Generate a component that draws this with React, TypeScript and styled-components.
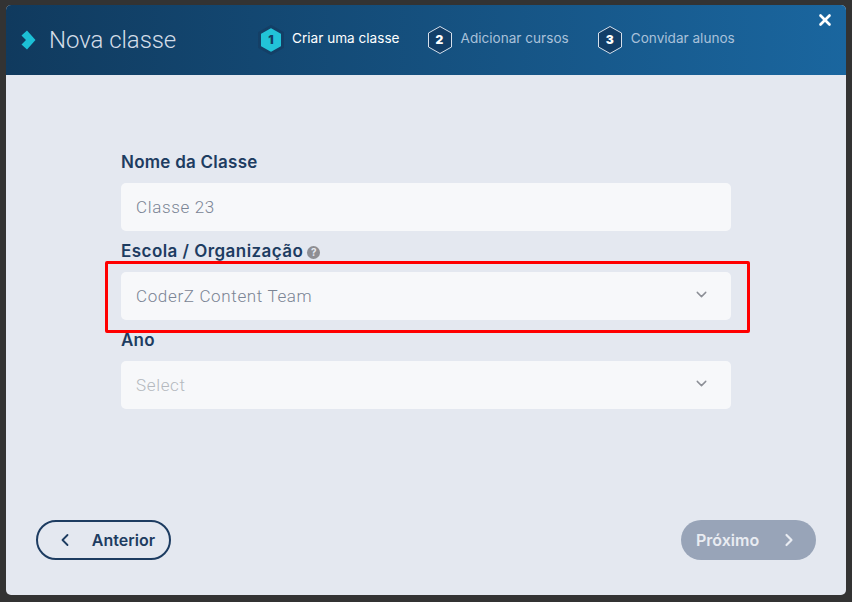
import styled, { createGlobalStyle } from 'styled-components'
import { ChevronDown, ChevronLeft, ChevronRight, X } from 'lucide-react'

const GlobalStyle = createGlobalStyle`
  html, body {
    margin: 0;
    padding: 0;
    background: #333333;
    font-family: Inter, "Noto Sans", sans-serif;
  }
  * { box-sizing: border-box; }
`

const Page = styled.div`
  position: relative;
  width: 852px;
  height: 602px;
  padding: 5px 6px 7px;
  background: #333333;
  overflow: hidden;
`

const Modal = styled.div`
  display: flex;
  flex-direction: column;
  width: 840px;
  height: 590px;
  border-radius: 5px;
  background: #e4e8f0;
  overflow: hidden;
`

const Header = styled.div`
  position: relative;
  display: flex;
  align-items: center;
  height: 70px;
  flex: none;
  padding-left: 15px;
  background: linear-gradient(90deg, #103a5e 0%, #1a669f 100%);
`

const TitleMark = styled.svg`
  width: 15px;
  height: 20px;
  flex: none;
`

const Title = styled.div`
  width: 208px;
  margin-left: 13px;
  font-family: Roboto, sans-serif;
  font-size: 24px;
  font-weight: 300;
  letter-spacing: -0.05px;
  color: #d4dde8;
`

const Steps = styled.div`
  display: flex;
  align-items: center;
  margin-top: -1px;
`

const Step = styled.div<{ $gap: number }>`
  display: flex;
  align-items: center;
  gap: 7px;
  margin-right: ${(p) => p.$gap}px;
`

const HexWrap = styled.div`
  position: relative;
  width: 28px;
  height: 30px;
  flex: none;
`

const HexNumber = styled.span<{ $active?: boolean }>`
  position: absolute;
  inset: 0;
  display: flex;
  align-items: center;
  justify-content: center;
  font-size: 12px;
  font-weight: 900;
  color: ${(p) => (p.$active ? '#123e63' : '#ffffff')};
`

const StepLabel = styled.span<{ $active?: boolean }>`
  font-size: 13.6px;
  line-height: 20px;
  margin-top: -3px;
  color: ${(p) => (p.$active ? '#ffffff' : '#a9c1da')};
`

const CloseButton = styled.button`
  position: absolute;
  top: 6px;
  right: 12px;
  display: flex;
  padding: 0;
  border: none;
  background: none;
  color: #ffffff;
`

const Form = styled.div`
  display: flex;
  flex-direction: column;
  width: 610px;
  margin-left: 115px;
  padding-top: 67px;
`

const Field = styled.div`
  display: flex;
  flex-direction: column;
`

const Label = styled.div<{ $spacing?: number }>`
  display: flex;
  align-items: center;
  gap: 4px;
  height: 41px;
  padding-bottom: 1px;
  font-size: 17px;
  font-weight: 600;
  letter-spacing: ${(p) => p.$spacing ?? 0.25}px;
  color: #1d3c61;
`

const HelpIcon = styled.span`
  display: inline-flex;
  align-items: center;
  justify-content: center;
  width: 13px;
  height: 13px;
  margin-top: 2px;
  border-radius: 50%;
  background: #8e8e93;
  font-size: 10px;
  font-weight: 700;
  letter-spacing: 0;
  color: #e4e8f0;
`

const Input = styled.div<{ $tone: string }>`
  display: flex;
  align-items: center;
  justify-content: space-between;
  height: 48px;
  padding: 0 21px 0 15px;
  border-radius: 5px;
  background: #f7f8fa;
  font-family: Roboto, sans-serif;
  font-size: 17px;
  font-weight: 300;
  letter-spacing: 0.65px;
  color: ${(p) => p.$tone};
`

const Chevron = styled(ChevronDown)`
  width: 17px;
  height: 17px;
  margin-top: -3px;
  color: #8c8f96;
`

const Highlight = styled.div`
  position: absolute;
  left: 105px;
  top: 261px;
  width: 645px;
  height: 72px;
  border: 3px solid #ff0000;
  border-radius: 2px;
  pointer-events: none;
`

const Footer = styled.div`
  display: flex;
  justify-content: space-between;
  margin-top: auto;
  padding: 0 30px 35px;
`

const NavButton = styled.button<{ $filled?: boolean }>`
  display: flex;
  align-items: center;
  justify-content: space-between;
  width: 135px;
  height: 40px;
  padding: ${(p) => (p.$filled ? '0 17px 0 15px' : '0 14px 0 17px')};
  border-radius: 20px;
  border: ${(p) => (p.$filled ? 'none' : '2px solid #1d3c61')};
  background: ${(p) => (p.$filled ? '#98a4b8' : 'transparent')};
  font-family: Inter, sans-serif;
  font-size: 16px;
  font-weight: 600;
  color: ${(p) => (p.$filled ? '#e9ecf2' : '#1d3c61')};
`

const Hexagon = ({ active }: { active?: boolean }) => (
  <svg width="28" height="30" viewBox="0 0 28 30">
    <path
      d="M14 1.5 L25.5 8 V22 L14 28.5 L2.5 22 V8 Z"
      fill={active ? '#22c3d8' : '#123e68'}
      stroke={active ? '#143f66' : '#d5e0ec'}
      strokeWidth={active ? 3 : 1}
      strokeLinejoin="round"
    />
  </svg>
)

const steps = [
  { n: 1, label: 'Criar uma classe', active: true, gap: 26 },
  { n: 2, label: 'Adicionar cursos', active: false, gap: 27 },
  { n: 3, label: 'Convidar alunos', active: false, gap: 0 },
]

export default function App() {
  return (
    <Page>
      <GlobalStyle />
      <Modal>
        <Header>
          <TitleMark viewBox="0 0 15 20">
            <path d="M6 0.5 L14.5 10 L6 19.5 L0.5 14.5 L5 10 L0.5 5.5 Z" fill="#1cc0d6" />
          </TitleMark>
          <Title>Nova classe</Title>
          <Steps>
            {steps.map((s) => (
              <Step key={s.n} $gap={s.gap}>
                <HexWrap>
                  <Hexagon active={s.active} />
                  <HexNumber $active={s.active}>{s.n}</HexNumber>
                </HexWrap>
                <StepLabel $active={s.active}>{s.label}</StepLabel>
              </Step>
            ))}
          </Steps>
          <CloseButton>
            <X size={18} strokeWidth={3.5} />
          </CloseButton>
        </Header>
        <Form>
          <Field>
            <Label>Nome da Classe</Label>
            <Input $tone="#7a8494">Classe 23</Input>
          </Field>
          <Field>
            <Label $spacing={0.45}>
              Escola / Organização
              <HelpIcon>?</HelpIcon>
            </Label>
            <Input $tone="#7a8494">
              CoderZ Content Team
              <Chevron />
            </Input>
          </Field>
          <Field>
            <Label>Ano</Label>
            <Input $tone="#b4b8be">
              Select
              <Chevron />
            </Input>
          </Field>
        </Form>
        <Footer>
          <NavButton>
            <ChevronLeft size={20} strokeWidth={2.2} />
            Anterior
          </NavButton>
          <NavButton $filled>
            Próximo
            <ChevronRight size={20} strokeWidth={2.6} />
          </NavButton>
        </Footer>
      </Modal>
      <Highlight />
    </Page>
  )
}
